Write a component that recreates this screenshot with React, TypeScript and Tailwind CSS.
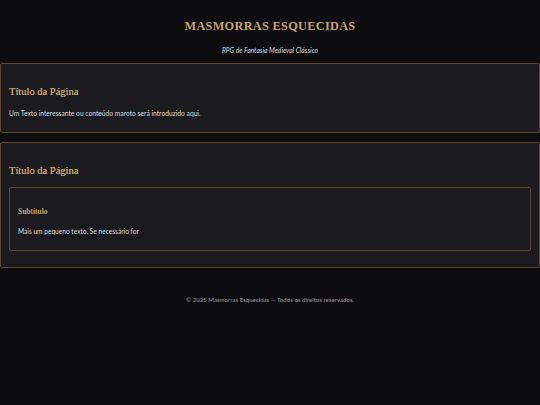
export default function App() {
  const serif = { fontFamily: '"Liberation Serif", "DejaVu Serif", serif' };
  return (
    <div
      className="min-h-[405px] bg-[#0d0d10] text-[#dcdcdc]"
      style={{ fontFamily: 'Lato, "Noto Sans", sans-serif' }}
    >
      {/* Header */}
      <header className="pt-[16px] text-center">
        <h1 className="text-[12.3px] leading-[20px] font-bold tracking-[0.3px] text-[#c9a26d]" style={serif}>
          MASMORRAS ESQUECIDAS
        </h1>
        <p className="mt-[9px] text-[6.7px] leading-[10px] italic text-[#dedede]">RPG de Fantasia Medieval Clássico</p>
      </header>

      {/* Content */}
      <main className="mt-[8px] flex flex-col gap-[9px]">
        <section className="rounded-[2px] border border-[#5b4631] bg-[#1b1a1f] px-[8px] pt-[20px] pb-[14px]">
          <h2 className="text-[10.5px] leading-[16px] text-[#c9a26d] [text-shadow:0_0_0.6px_#c9a26d]" style={serif}>
            Título da Página
          </h2>
          <p className="mt-[8px] text-[6.7px] leading-[10px]">
            Um Texto interessante ou conteúdo maroto será introduzido aqui.
          </p>
        </section>

        <section className="rounded-[2px] border border-[#5b4631] bg-[#1b1a1f] px-[8px] pt-[20px] pb-[16px]">
          <h2 className="text-[10.5px] leading-[16px] text-[#c9a26d] [text-shadow:0_0_0.6px_#c9a26d]" style={serif}>
            Título da Página
          </h2>
          <div className="mt-[8px] rounded-[2px] border border-[#5b4631] px-[8px] pt-[18px] pb-[14px]">
            <h3 className="text-[7.5px] leading-[12px] font-bold text-[#c9a26d]" style={serif}>
              Subtítulo
            </h3>
            <p className="mt-[8px] text-[6.6px] leading-[10px]">Mais um pequeno texto. Se necessário for</p>
          </div>
        </section>
      </main>

      {/* Footer */}
      <footer className="mt-[27px] text-center text-[6.1px] leading-[10px] text-[#9a9a9a]">
        © 2025 Masmorras Esquecidas — Todos os direitos reservados.
      </footer>
    </div>
  );
}
